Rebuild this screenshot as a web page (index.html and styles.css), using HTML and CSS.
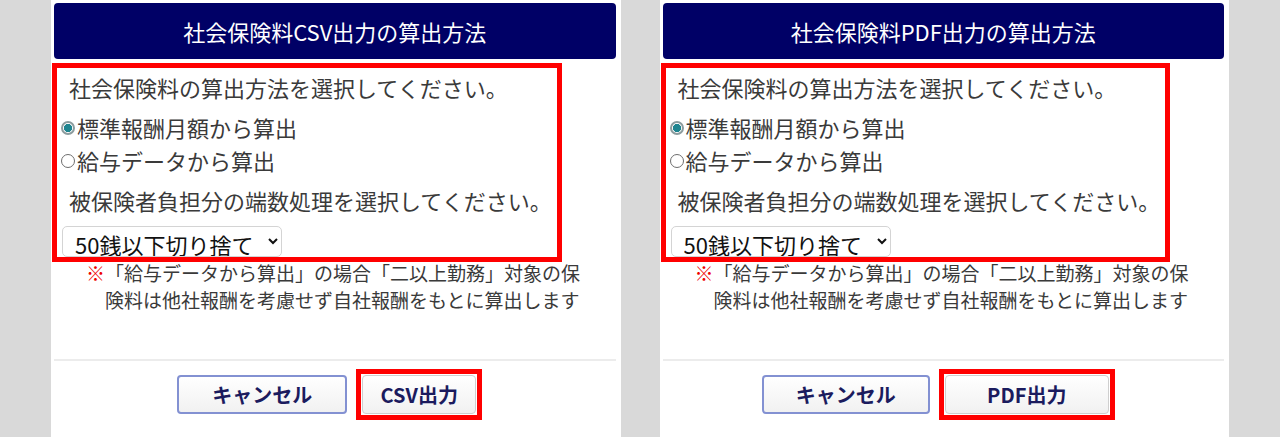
FILE: index.html
```html
<!DOCTYPE html>
<html lang="ja">

<head>
  <meta charset="UTF-8">
  <title>社会保険料出力の算出方法</title>
  <link rel="stylesheet" href="styles.css">
</head>

<body>
  <div class="page">
    <!-- CSV -->
    <section class="dialog">
      <h2 class="dialog-title">社会保険料CSV出力の算出方法</h2>
      <div class="highlight">
        <p class="lead">社会保険料の算出方法を選択してください。</p>
        <label class="option"><input type="radio" name="calc-csv" checked>標準報酬月額から算出</label>
        <label class="option"><input type="radio" name="calc-csv">給与データから算出</label>
        <p class="lead">被保険者負担分の端数処理を選択してください。</p>
        <select class="rounding">
          <option>50銭以下切り捨て</option>
        </select>
      </div>
      <p class="note"><span class="mark">※</span>「給与データから算出」の場合「二以上勤務」対象の保険料は他社報酬を考慮せず自社報酬をもとに算出します</p>
      <hr class="divider">
      <div class="actions">
        <button class="btn btn-cancel">キャンセル</button>
        <span class="marked"><button class="btn btn-submit btn-csv">CSV出力</button></span>
      </div>
    </section>

    <!-- PDF -->
    <section class="dialog">
      <h2 class="dialog-title">社会保険料PDF出力の算出方法</h2>
      <div class="highlight">
        <p class="lead">社会保険料の算出方法を選択してください。</p>
        <label class="option"><input type="radio" name="calc-pdf" checked>標準報酬月額から算出</label>
        <label class="option"><input type="radio" name="calc-pdf">給与データから算出</label>
        <p class="lead">被保険者負担分の端数処理を選択してください。</p>
        <select class="rounding">
          <option>50銭以下切り捨て</option>
        </select>
      </div>
      <p class="note"><span class="mark">※</span>「給与データから算出」の場合「二以上勤務」対象の保険料は他社報酬を考慮せず自社報酬をもとに算出します</p>
      <hr class="divider">
      <div class="actions">
        <button class="btn btn-cancel btn-wide">キャンセル</button>
        <span class="marked"><button class="btn btn-submit btn-pdf">PDF出力</button></span>
      </div>
    </section>
  </div>
</body>

</html>
```

FILE: styles.css
```css
body {
  margin: 0;
  background: #d9d9d9;
  color: #3a3a3a;
  font-family: 'Noto Sans CJK JP', 'Noto Sans', sans-serif;
}

.page {
  display: grid;
  grid-template-columns: 1fr 1fr;
  gap: 39px;
  padding: 0 51px;
  height: 437px;
  overflow: hidden;
}

.dialog {
  background: #fff;
  display: flex;
  flex-direction: column;
  align-items: flex-start;
}

.dialog-title {
  align-self: stretch;
  margin: 3px 5px 0 3px;
  height: 56px;
  background: #000066;
  border-radius: 4px;
  color: #fff;
  font-size: 22px;
  font-weight: normal;
  line-height: 56px;
  text-align: center;
}

.highlight {
  margin: 4px 0 0 1px;
  padding: 3px 5px 0 0;
  border: 5px solid #ff0000;
  display: flex;
  flex-direction: column;
  align-items: flex-start;
}

.lead {
  margin: 0 0 8px 12px;
  font-size: 22px;
  line-height: 32px;
}

.option {
  display: flex;
  align-items: center;
  font-size: 22px;
  line-height: 32px;
  margin-bottom: 1px;
}

.option input {
  appearance: none;
  flex: none;
  box-sizing: border-box;
  width: 14px;
  height: 14px;
  margin: 1px 2px 0 4px;
  border: 1px solid #6e6e6e;
  border-radius: 50%;
  background: #fff;
}

.option input:checked {
  border: 2px solid #8c9c9e;
  background: radial-gradient(circle, #1f8590 0 3.8px, #ffffff 4.4px);
}

.option + .lead {
  margin-top: 7px;
}

.rounding {
  margin: 2px 0 0 5px;
  width: 220px;
  height: 31px;
  padding: 0 4px 0 8px;
  border: 1px solid #d4d4d4;
  border-radius: 5px;
  background: #fff;
  color: #111;
  font-family: inherit;
  font-size: 22px;
}

.note {
  margin: -3px 0 0 0;
  padding-left: 54px;
  width: 484px;
  text-indent: -19px;
  font-size: 19px;
  line-height: 27px;
  color: #3a3a3a;
}

.mark {
  color: #ee0000;
}

.divider {
  align-self: stretch;
  margin: 46px 5px 0 3px;
  border: none;
  border-top: 2px solid #ececec;
}

.actions {
  align-self: stretch;
  display: flex;
  justify-content: center;
  align-items: center;
  gap: 9px;
  margin-top: 8px;
  padding-right: 12px;
}

.marked {
  display: flex;
  padding: 1px;
  border: 5px solid #ff0000;
}

.btn {
  height: 39px;
  border-radius: 4px;
  background: linear-gradient(#ffffff, #f1f1f1);
  color: #1b1b5e;
  font-family: inherit;
  font-size: 20px;
  font-weight: bold;
  cursor: pointer;
}

.btn-cancel {
  width: 170px;
  border: 2px solid #8391d2;
}

.btn-wide {
  width: 168px;
}

.btn-submit {
  border: 1px solid #cfcfcf;
}

.btn-csv {
  width: 114px;
}

.btn-pdf {
  width: 164px;
}
```
